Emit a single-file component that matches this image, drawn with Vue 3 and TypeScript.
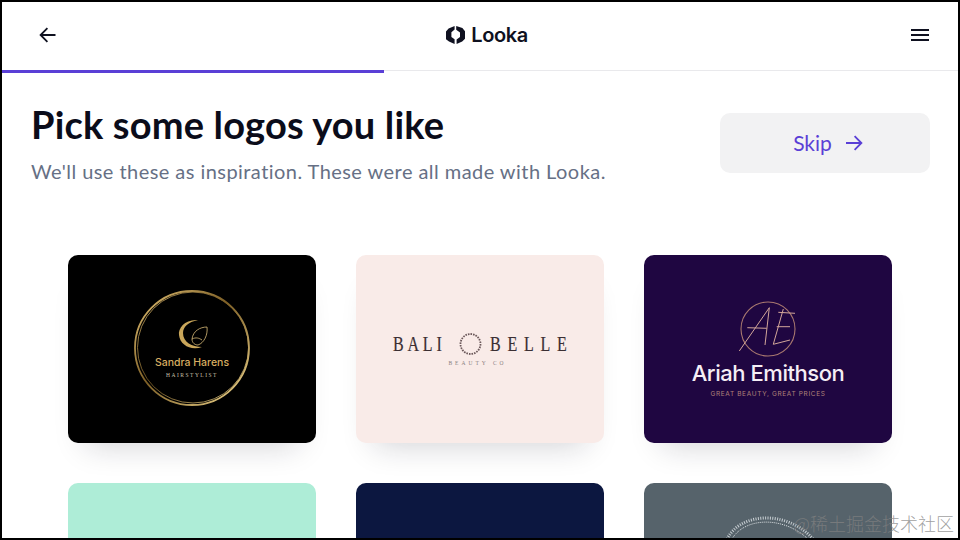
<template>
  <div class="frame">
    <header class="topbar">
      <button class="icon-btn" aria-label="Back">
        <svg width="18" height="16" viewBox="0 0 18 16" fill="none" stroke="#0f1120" stroke-width="1.8">
          <path d="M16.5 8H1.8M8.4 1.2 1.6 8l6.8 6.8" />
        </svg>
      </button>
      <div class="brand">
        <svg width="19" height="18" viewBox="0 0 19 18" fill="#0f1120">
          <path d="M8.6 0 2.6 2.4 0 5.4v7.8l3 2.4 5.6 2.4v-4.8L5.4 11V6.2l3.2-2.6z" />
          <path d="M10.2 0 16.4 2l2.6 3.2v7.6l-2.8 2.8-5.6 2.4v-4.4l3.4-2.6V6.4L10.2 3.8z" />
        </svg>
        <span>Looka</span>
      </div>
      <button class="icon-btn" aria-label="Menu">
        <svg width="18" height="14" viewBox="0 0 18 14" fill="none" stroke="#0f1120" stroke-width="2">
          <path d="M0 2h18M0 7h18M0 12h18" />
        </svg>
      </button>
    </header>
    <div class="progress"><div class="progress-fill" :style="{ width: progress + 'px' }"></div></div>

    <section class="intro">
      <div>
        <h1>Pick some logos you like</h1>
        <p>We'll use these as inspiration. These were all made with Looka.</p>
      </div>
      <button class="skip">
        <span>Skip</span>
        <svg width="18" height="16" viewBox="0 0 18 16" fill="none" stroke="#5a3fd6" stroke-width="1.8">
          <path d="M1 8h15.2M9.6 1.2 16.4 8l-6.8 6.8" />
        </svg>
      </button>
    </section>

    <div class="grid">
      <div class="card shadow black">
        <svg viewBox="0 0 248 188" width="248" height="188">
          <defs>
            <linearGradient id="gold" x1="0" y1="0" x2="1" y2="1">
              <stop offset="0" stop-color="#e6c477" />
              <stop offset="0.45" stop-color="#7d5f26" />
              <stop offset="1" stop-color="#f4da90" />
            </linearGradient>
          </defs>
          <circle cx="124" cy="93" r="57" fill="none" stroke="url(#gold)" stroke-width="1.8" />
          <circle cx="125" cy="92.5" r="55.5" fill="none" stroke="url(#gold)" stroke-width="0.8" />
          <path d="M130 65C117 64 110 73 111 80c1 10 12 16 23 12-10 0-19-5-19-14 0-6 5-11 15-13z" fill="#c9a65a" />
          <path d="M139 72c-7 0-14 4-15 12 0 4 3 6 6 6 6-2 10-10 9-18zM124 84c4-2 7-1 10 1" fill="none" stroke="#d9bb78" stroke-width="0.8" />
          <text x="124" y="111" class="t-sandra">Sandra Harens</text>
          <text x="124" y="122" class="t-sandra-sub">HAIRSTYLIST</text>
        </svg>
      </div>
      <div class="card shadow blush">
        <svg viewBox="0 0 248 188" width="248" height="188">
          <g transform="translate(37 96) scale(.8 1)">
            <text class="t-bali" textLength="61">BALI</text>
          </g>
          <circle cx="114.5" cy="89" r="10" fill="none" stroke="#6d5a5c" stroke-width="1.8" stroke-dasharray="1.6 1" />
          <g transform="translate(134 96) scale(.8 1)">
            <text class="t-bali" textLength="96">BELLE</text>
          </g>
          <text x="121.5" y="110" class="t-bali-sub">BEAUTY CO</text>
        </svg>
      </div>
      <div class="card shadow purple">
        <svg viewBox="0 0 248 188" width="248" height="188">
          <circle cx="124" cy="74" r="27" fill="none" stroke="#a8786f" stroke-width="1.1" />
          <path
            d="M95.3 96 125.3 52.7 121 90M103.3 72.7 122.7 73.3M139.3 54 129.3 89.3 146 85M134.3 57.3 151 58.3M132.7 71.7H146"
            fill="none"
            stroke="#d3a79a"
            stroke-width="1"
          />
          <text x="124" y="126" class="t-ariah">Ariah Emithson</text>
          <text x="124" y="141" class="t-ariah-sub">GREAT BEAUTY, GREAT PRICES</text>
        </svg>
      </div>
      <div class="card mint"></div>
      <div class="card navy"></div>
      <div class="card slate">
        <svg viewBox="0 0 248 188" width="248" height="188">
          <path d="M83 56C96 30 142 26 169 56" fill="none" stroke="#c9d0d4" stroke-width="3" stroke-dasharray="1 1.4" />
          <path d="M88 56C100 35 138 32 164 56" fill="none" stroke="#dfe3e6" stroke-width="1" stroke-dasharray="1 1" />
        </svg>
      </div>
    </div>

    <div class="watermark">@稀土掘金技术社区</div>
  </div>
</template>

<script setup lang="ts">
const progress = 382;
</script>

<style>
html,
body {
  margin: 0;
  overflow: hidden;
  background: #fff;
}
</style>

<style scoped>
.frame {
  position: relative;
  box-sizing: border-box;
  width: 960px;
  height: 540px;
  border: 2px solid #000;
  overflow: hidden;
  background: #fff;
  font-family: Lato, "Liberation Sans", sans-serif;
}
.topbar {
  display: flex;
  align-items: center;
  justify-content: space-between;
  height: 66px;
  padding: 0 29px 2px 37px;
  border-bottom: 1px solid #e9e9ec;
}
.icon-btn {
  display: flex;
  padding: 0;
  border: 0;
  background: none;
}
.brand {
  display: flex;
  align-items: center;
  gap: 6px;
  margin-left: 6px;
  font-size: 20px;
  font-weight: 600;
  color: #0f1120;
  font-family: Inter, sans-serif;
  letter-spacing: -0.4px;
}
.progress {
  height: 3px;
  margin-top: -1px;
}
.progress-fill {
  height: 3px;
  background: #5a3fd6;
}
.intro {
  display: flex;
  justify-content: space-between;
  align-items: flex-start;
  padding: 29px 28px 0 29px;
}
h1 {
  margin: 0;
  font-size: 38px;
  line-height: 44px;
  font-weight: 700;
  letter-spacing: 0.17px;
  color: #0b0c1a;
}
p {
  margin: 12px 0 0;
  font-size: 20px;
  line-height: 26px;
  letter-spacing: 0.45px;
  color: #667085;
}
.skip {
  display: flex;
  align-items: center;
  justify-content: center;
  gap: 13px;
  width: 210px;
  height: 60px;
  margin-top: 11px;
  padding: 0 0 2px 6px;
  border: 0;
  border-radius: 10px;
  background: #f2f2f3;
  color: #5a3fd6;
  font: inherit;
  font-size: 21px;
}
.skip svg {
  margin-top: 2px;
}
.grid {
  display: grid;
  grid-template-columns: repeat(3, 248px);
  grid-auto-rows: 188px;
  gap: 40px;
  padding: 0 0 0 66px;
  margin-top: 71px;
}
.card {
  border-radius: 10px;
  overflow: hidden;
}
.card svg {
  display: block;
}
.shadow {
  box-shadow: 0 20px 30px -18px rgba(20, 20, 40, 0.2);
}
.black {
  background: #000;
}
.blush {
  background: #f9ebe8;
}
.purple {
  background: #1f0641;
}
.mint {
  background: #aeedd7;
}
.navy {
  background: #0c1740;
}
.slate {
  background: #56636b;
}
.t-sandra {
  text-anchor: middle;
  font: 500 10.5px Inter, sans-serif;
  fill: #d8ae62;
}
.t-sandra-sub {
  text-anchor: middle;
  font: 5.5px "Liberation Serif", serif;
  letter-spacing: 1.5px;
  fill: #c9c0a8;
}
.t-bali {
  font: 20px "Liberation Serif", serif;
  fill: #3b2f33;
  stroke: #3b2f33;
  stroke-width: 0.2px;
}
.t-bali-sub {
  text-anchor: middle;
  font: 5.5px "Liberation Serif", serif;
  letter-spacing: 3px;
  fill: #8b7f7f;
}
.t-ariah {
  text-anchor: middle;
  font: 500 22px Inter, sans-serif;
  letter-spacing: -0.45px;
  fill: #f5eef5;
}
.t-ariah-sub {
  text-anchor: middle;
  font: 6.5px Inter, sans-serif;
  letter-spacing: 0.65px;
  fill: #b08379;
}
.watermark {
  position: absolute;
  right: 4px;
  bottom: 3px;
  font: 300 18px "Noto Sans CJK SC", sans-serif;
  line-height: 24px;
  color: rgba(130, 130, 130, 0.75);
}
</style>
